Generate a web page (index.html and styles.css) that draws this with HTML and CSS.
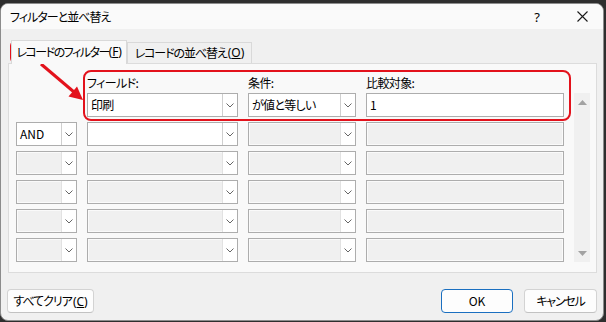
FILE: index.html
```html
<!DOCTYPE html>
<html lang="ja">
<head>
<meta charset="utf-8">
<link rel="stylesheet" href="styles.css">
</head>
<body>
<div class="dialog">
  <div class="titlebar">
    <span class="title">フィルターと並べ替え</span>
    <span class="help">?</span>
    <span class="close"><svg width="11" height="11" viewBox="0 0 11 11"><path d="M0.5 0.5 L10.5 10.5 M10.5 0.5 L0.5 10.5" stroke="#1a1a1a" stroke-width="1.1" fill="none"/></svg></span>
  </div>
  <div class="content">
    <div class="tabs">
      <div class="tab active">レコードのフィルター<span class="paren">(<u>F</u>)</span></div>
      <div class="tab">レコードの並べ替え<span class="paren">(<u>O</u>)</span></div>
    </div>
    <div class="panel">
      <div class="grid">
        <span class="label c2">フィールド:</span>
        <span class="label">条件:</span>
        <span class="label">比較対象:</span>
        <div class="scroll">
          <svg width="9" height="5" viewBox="0 0 9 5"><path d="M4.5 0 L9 5 L0 5 Z" fill="#a2a2a2"/></svg>
          <svg width="9" height="5" viewBox="0 0 9 5"><path d="M0 0 L9 0 L4.5 5 Z" fill="#a2a2a2"/></svg>
        </div>

        <div class="combo on c2"><span class="val jp">印刷</span><span class="btn"><svg width="8" height="5" viewBox="0 0 8 5"><path d="M0.5 0.5 L4 4 L7.5 0.5" stroke="#666" fill="none"/></svg></span></div>
        <div class="combo on"><span class="val jp">が値と等しい</span><span class="btn"><svg width="8" height="5" viewBox="0 0 8 5"><path d="M0.5 0.5 L4 4 L7.5 0.5" stroke="#666" fill="none"/></svg></span></div>
        <div class="input on">1</div>

        <div class="combo on"><span class="val">AND</span><span class="btn"><svg width="8" height="5" viewBox="0 0 8 5"><path d="M0.5 0.5 L4 4 L7.5 0.5" stroke="#666" fill="none"/></svg></span></div>
        <div class="combo on"><span class="val"></span><span class="btn"><svg width="8" height="5" viewBox="0 0 8 5"><path d="M0.5 0.5 L4 4 L7.5 0.5" stroke="#666" fill="none"/></svg></span></div>
        <div class="combo"><span class="val"></span><span class="btn"><svg width="8" height="5" viewBox="0 0 8 5"><path d="M0.5 0.5 L4 4 L7.5 0.5" stroke="#666" fill="none"/></svg></span></div>
        <div class="input"></div>

        <div class="combo"><span class="val"></span><span class="btn"><svg width="8" height="5" viewBox="0 0 8 5"><path d="M0.5 0.5 L4 4 L7.5 0.5" stroke="#666" fill="none"/></svg></span></div>
        <div class="combo"><span class="val"></span><span class="btn"><svg width="8" height="5" viewBox="0 0 8 5"><path d="M0.5 0.5 L4 4 L7.5 0.5" stroke="#666" fill="none"/></svg></span></div>
        <div class="combo"><span class="val"></span><span class="btn"><svg width="8" height="5" viewBox="0 0 8 5"><path d="M0.5 0.5 L4 4 L7.5 0.5" stroke="#666" fill="none"/></svg></span></div>
        <div class="input"></div>

        <div class="combo"><span class="val"></span><span class="btn"><svg width="8" height="5" viewBox="0 0 8 5"><path d="M0.5 0.5 L4 4 L7.5 0.5" stroke="#666" fill="none"/></svg></span></div>
        <div class="combo"><span class="val"></span><span class="btn"><svg width="8" height="5" viewBox="0 0 8 5"><path d="M0.5 0.5 L4 4 L7.5 0.5" stroke="#666" fill="none"/></svg></span></div>
        <div class="combo"><span class="val"></span><span class="btn"><svg width="8" height="5" viewBox="0 0 8 5"><path d="M0.5 0.5 L4 4 L7.5 0.5" stroke="#666" fill="none"/></svg></span></div>
        <div class="input"></div>

        <div class="combo"><span class="val"></span><span class="btn"><svg width="8" height="5" viewBox="0 0 8 5"><path d="M0.5 0.5 L4 4 L7.5 0.5" stroke="#666" fill="none"/></svg></span></div>
        <div class="combo"><span class="val"></span><span class="btn"><svg width="8" height="5" viewBox="0 0 8 5"><path d="M0.5 0.5 L4 4 L7.5 0.5" stroke="#666" fill="none"/></svg></span></div>
        <div class="combo"><span class="val"></span><span class="btn"><svg width="8" height="5" viewBox="0 0 8 5"><path d="M0.5 0.5 L4 4 L7.5 0.5" stroke="#666" fill="none"/></svg></span></div>
        <div class="input"></div>

        <div class="combo"><span class="val"></span><span class="btn"><svg width="8" height="5" viewBox="0 0 8 5"><path d="M0.5 0.5 L4 4 L7.5 0.5" stroke="#666" fill="none"/></svg></span></div>
        <div class="combo"><span class="val"></span><span class="btn"><svg width="8" height="5" viewBox="0 0 8 5"><path d="M0.5 0.5 L4 4 L7.5 0.5" stroke="#666" fill="none"/></svg></span></div>
        <div class="combo"><span class="val"></span><span class="btn"><svg width="8" height="5" viewBox="0 0 8 5"><path d="M0.5 0.5 L4 4 L7.5 0.5" stroke="#666" fill="none"/></svg></span></div>
        <div class="input"></div>
      </div>
    </div>
    <div class="footer">
      <button class="button clear">すべてクリア<span class="paren">(<u>C</u>)</span></button>
      <span class="spacer"></span>
      <button class="button ok">OK</button>
      <button class="button cancel">キャンセル</button>
    </div>
  </div>
</div>
<svg class="annot" width="606" height="322" viewBox="0 0 606 322">
  <rect x="11" y="41" width="115" height="22" rx="5" fill="none" stroke="#e3121c" stroke-width="2"/>
  <rect x="84" y="71" width="486" height="49" rx="7" fill="none" stroke="#e3121c" stroke-width="2"/>
  <line x1="41" y1="64" x2="74" y2="92" stroke="#e3121c" stroke-width="3"/>
  <polygon points="83,100 68.5,96.5 77,86.5" fill="#e3121c"/>
</svg>
</body>
</html>
```
FILE: styles.css
```css
* { box-sizing: border-box; margin: 0; padding: 0; }
html, body { width: 606px; height: 322px; overflow: hidden; }
body {
  background: #2e2e2e;
  font-family: "Noto Sans CJK JP", "Noto Sans", sans-serif;
  font-size: 12px;
  color: #000;
  font-feature-settings: "palt";
  position: relative;
}
.dialog {
  margin-top: 3px;
  width: 604px;
  height: 318px;
  background: #f0f0f0;
  border: 1px solid #8c8c8c;
  border-radius: 8px;
  display: flex;
  flex-direction: column;
  overflow: hidden;
}
.titlebar {
  height: 25px;
  flex: none;
  background: #fafafa;
  display: flex;
  align-items: center;
  padding-left: 9px;
  padding-right: 6px;
  line-height: 16px;
}
.title { flex: 1; letter-spacing: -1px; }
.help { width: 30px; text-align: center; font-family: "Noto Sans", sans-serif; font-size: 13px; }
.close { width: 30px; margin-left: 15px; display: flex; justify-content: center; }
.content {
  flex: 1;
  display: flex;
  flex-direction: column;
  padding: 11px 6px 0 7px;
}
.tabs { display: flex; align-items: flex-end; margin-left: 3px; height: 23px; }
.tab {
  height: 21px;
  width: 125px;
  border: 1px solid #d9d9d9;
  border-bottom: none;
  background: #f0f0f0;
  display: flex;
  align-items: center;
  justify-content: center;
  line-height: 16px;
  letter-spacing: -1.1px;
  white-space: nowrap;
}
.paren { font-family: "Noto Sans", sans-serif; letter-spacing: 0; margin-left: 1px; }
.tab.active {
  height: 24px;
  width: 116px;
  background: #f9f9f9;
  margin-bottom: -1px;
  position: relative;
  z-index: 1;
  padding-bottom: 1px;
  letter-spacing: -1.5px;
}
.tab.active .paren { margin-left: 0; letter-spacing: -0.3px; }
.panel {
  height: 210px;
  border: 1px solid #dcdcdc;
  background: #f9f9f9;
  padding: 8px 6px 9px 7px;
}
.grid {
  display: grid;
  grid-template-columns: 61px 151px 108px 198px 16px;
  grid-template-rows: 16px repeat(6, 24px);
  column-gap: 10px;
  row-gap: 5px;
}
.c2 { grid-column: 2; }
.label { align-self: end; line-height: 16px; margin-bottom: -3px; letter-spacing: -0.6px; white-space: nowrap; }
.scroll {
  grid-column: 5;
  grid-row: 2 / span 6;
  background: #f0f0f0;
  display: flex;
  flex-direction: column;
  align-items: center;
  justify-content: space-between;
  padding: 7px 0 6px;
}
.combo {
  display: flex;
  border: 1px solid #adadad;
  background: #f0f0f0;
  box-shadow: inset 0 0 0 1px #fafafa;
}
.combo .val { flex: 1; padding-left: 3px; line-height: 22px; white-space: nowrap; }
.jp { letter-spacing: -0.7px; }
.combo .btn {
  width: 15px;
  flex: none;
  background: #fff;
  border-left: 1px solid #e2e2e2;
  display: flex;
  align-items: center;
  justify-content: center;
}
.combo.on { background: #fff; box-shadow: none; }
.combo.on .btn { border-left-color: #cfcfcf; }
.input {
  border: 1px solid #adadad;
  background: #f0f0f0;
  box-shadow: inset 0 0 0 1px #fafafa;
  padding-left: 3px;
  line-height: 22px;
}
.input.on { background: #fff; box-shadow: none; }
.footer {
  margin-top: 16px;
  display: flex;
  height: 24px;
  margin-left: -1px;
}
.spacer { flex: 1; }
.button {
  font: inherit;
  font-feature-settings: "palt";
  height: 24px;
  background: #fdfdfd;
  border: 1px solid #d3d3d3;
  border-bottom-color: #c2c2c2;
  border-radius: 4px;
  color: #000;
  line-height: 16px;
  white-space: nowrap;
}
.clear { width: 87px; letter-spacing: -1px; }
.ok { width: 72px; border-color: #1a6fc0; }
.cancel { width: 73px; margin-left: 11px; letter-spacing: -1.2px; }
.annot { position: absolute; left: 0; top: 0; pointer-events: none; }
```
